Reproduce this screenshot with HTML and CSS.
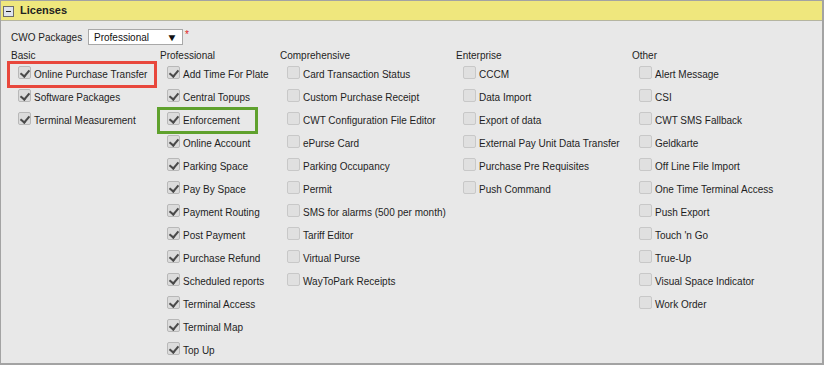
FILE: index.html
```html
<!DOCTYPE html>
<html>
<head>
<meta charset="utf-8">
<link rel="stylesheet" href="styles.css">
</head>
<body>
<div class="panel">
  <div class="panel-head">
    <span class="toggle"><span class="minus"></span></span>
    <span class="title">Licenses</span>
  </div>
  <div class="panel-body">
    <div class="pkg-row">
      <span class="pkg-label">CWO Packages</span>
      <span class="select"><span class="select-text">Professional</span><span class="arrow">&#9660;</span></span>
      <span class="req">*</span>
    </div>
    <div class="cols">
      <div class="col col-basic">
        <div class="col-head">Basic</div>
        <div class="item checked hl-red"><span class="cb"></span>Online Purchase Transfer</div>
        <div class="item checked"><span class="cb"></span>Software Packages</div>
        <div class="item checked"><span class="cb"></span>Terminal Measurement</div>
      </div>
      <div class="col col-pro">
        <div class="col-head">Professional</div>
        <div class="item checked"><span class="cb"></span>Add Time For Plate</div>
        <div class="item checked"><span class="cb"></span>Central Topups</div>
        <div class="item checked hl-green"><span class="cb"></span>Enforcement</div>
        <div class="item checked"><span class="cb"></span>Online Account</div>
        <div class="item checked"><span class="cb"></span>Parking Space</div>
        <div class="item checked"><span class="cb"></span>Pay By Space</div>
        <div class="item checked"><span class="cb"></span>Payment Routing</div>
        <div class="item checked"><span class="cb"></span>Post Payment</div>
        <div class="item checked"><span class="cb"></span>Purchase Refund</div>
        <div class="item checked"><span class="cb"></span>Scheduled reports</div>
        <div class="item checked"><span class="cb"></span>Terminal Access</div>
        <div class="item checked"><span class="cb"></span>Terminal Map</div>
        <div class="item checked"><span class="cb"></span>Top Up</div>
      </div>
      <div class="col col-comp">
        <div class="col-head">Comprehensive</div>
        <div class="item"><span class="cb"></span>Card Transaction Status</div>
        <div class="item"><span class="cb"></span>Custom Purchase Receipt</div>
        <div class="item"><span class="cb"></span>CWT Configuration File Editor</div>
        <div class="item"><span class="cb"></span>ePurse Card</div>
        <div class="item"><span class="cb"></span>Parking Occupancy</div>
        <div class="item"><span class="cb"></span>Permit</div>
        <div class="item"><span class="cb"></span>SMS for alarms (500 per month)</div>
        <div class="item"><span class="cb"></span>Tariff Editor</div>
        <div class="item"><span class="cb"></span>Virtual Purse</div>
        <div class="item"><span class="cb"></span>WayToPark Receipts</div>
      </div>
      <div class="col col-ent">
        <div class="col-head">Enterprise</div>
        <div class="item"><span class="cb"></span>CCCM</div>
        <div class="item"><span class="cb"></span>Data Import</div>
        <div class="item"><span class="cb"></span>Export of data</div>
        <div class="item"><span class="cb"></span>External Pay Unit Data Transfer</div>
        <div class="item"><span class="cb"></span>Purchase Pre Requisites</div>
        <div class="item"><span class="cb"></span>Push Command</div>
      </div>
      <div class="col col-other">
        <div class="col-head">Other</div>
        <div class="item"><span class="cb"></span>Alert Message</div>
        <div class="item"><span class="cb"></span>CSI</div>
        <div class="item"><span class="cb"></span>CWT SMS Fallback</div>
        <div class="item"><span class="cb"></span>Geldkarte</div>
        <div class="item"><span class="cb"></span>Off Line File Import</div>
        <div class="item"><span class="cb"></span>One Time Terminal Access</div>
        <div class="item"><span class="cb"></span>Push Export</div>
        <div class="item"><span class="cb"></span>Touch 'n Go</div>
        <div class="item"><span class="cb"></span>True-Up</div>
        <div class="item"><span class="cb"></span>Visual Space Indicator</div>
        <div class="item"><span class="cb"></span>Work Order</div>
      </div>
    </div>
  </div>
</div>
</body>
</html>
```

FILE: styles.css
```css
* { box-sizing: border-box; }
html, body {
  margin: 0;
  padding: 0;
  background: #e8e8e8;
}
body {
  font-family: "Liberation Sans", Arial, sans-serif;
  font-size: 10px;
  color: #1e1e1e;
}
.panel {
  width: 824px;
  height: 365px;
  border: 1px solid #a3a3a3;
  border-right-width: 2px;
  border-bottom-width: 2px;
  background: #e8e8e8;
  overflow: hidden;
}
.panel-head {
  height: 20px;
  background: #efe77d;
  border-bottom: 1px solid #b5b5a0;
  display: flex;
  align-items: center;
  padding-left: 2px;
}
.toggle {
  width: 11px;
  height: 11px;
  border: 1px solid #6b6b6b;
  background: #dfe4ee;
  display: flex;
  align-items: center;
  justify-content: center;
  margin-right: 6px;
  margin-top: 1px;
}
.minus {
  width: 5px;
  height: 1px;
  background: #222;
}
.title {
  font-size: 11px;
  font-weight: bold;
  color: #222;
  margin-top: -2px;
}
.panel-body {
  padding: 8px 0 0 10px;
}
.pkg-row {
  display: flex;
  align-items: center;
  height: 16px;
}
.pkg-label {
  width: 77px;
}
.select {
  width: 95px;
  height: 16px;
  background: #fff;
  border: 1px solid #a8a8a8;
  display: flex;
  align-items: center;
  justify-content: space-between;
  padding: 0 5px 0 5px;
  color: #111;
}
.arrow {
  font-size: 10px;
  color: #111;
  transform: scaleX(1.15);
}
.req {
  color: #e02020;
  margin-left: 2px;
  align-self: flex-start;
  font-size: 10px;
}
.cols {
  display: flex;
  margin-top: 3px;
}
.col-head {
  height: 15px;
  line-height: 15px;
}
.col-basic { width: 149px; }
.col-pro { width: 120px; }
.col-comp { width: 176px; }
.col-ent { width: 176px; }
.col-other { width: 180px; }
.item {
  height: 23px;
  display: flex;
  align-items: center;
  padding-left: 7px;
  white-space: nowrap;
}
.cb {
  width: 13px;
  height: 13px;
  border: 1px solid #c8c8c8;
  border-radius: 2px;
  background: #e0e0e0;
  margin-right: 3px;
  margin-top: -4px;
  position: relative;
  flex: none;
}
.checked .cb {
  border-color: #b8b8b8;
  background: #dcdcdc;
}
.checked .cb::after {
  content: "";
  position: absolute;
  left: 3px;
  top: 1px;
  width: 4px;
  height: 7px;
  border-right: 2px solid #4a4a4a;
  border-bottom: 2px solid #4a4a4a;
  transform: rotate(40deg);
}
.hl-red {
  outline: 3px solid #e8473c;
  outline-offset: -1px;
  margin-left: -2px;
  padding-left: 9px;
  width: 146px;
}
.hl-green {
  outline: 3px solid #5fa12d;
  outline-offset: -1px;
  margin-left: -1px;
  padding-left: 8px;
  width: 97px;
}
```
